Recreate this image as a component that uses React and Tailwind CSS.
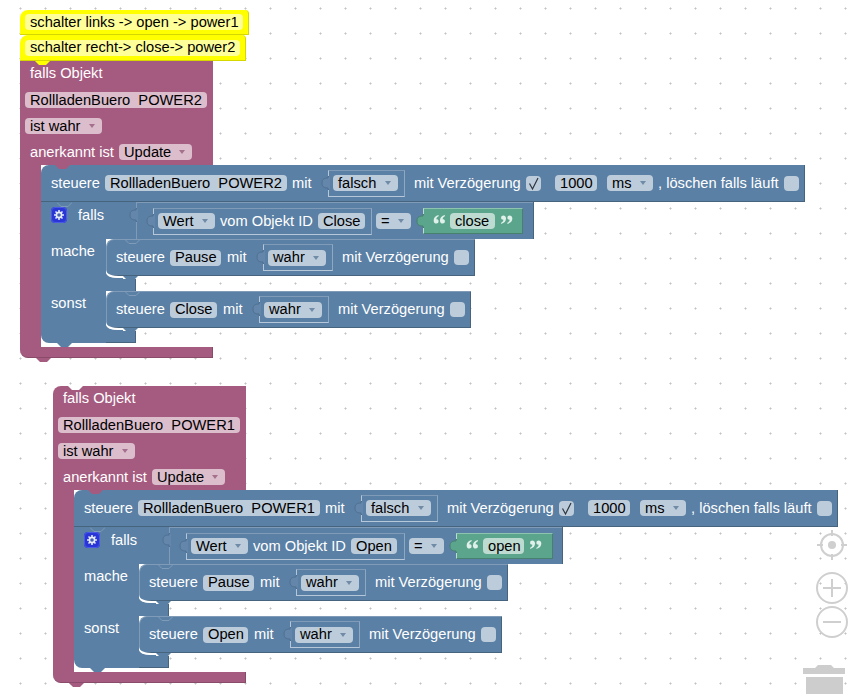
const FONT = "font-['Liberation_Sans',Arial,sans-serif] text-[14.67px] leading-none";

function Arrow({ color = "#6f8ba6" }) {
  return (
    <svg width="6" height="4" viewBox="0 0 6 4" className="shrink-0">
      <path d="M0 0H6L3 4Z" fill={color} />
    </svg>
  );
}

function Pill({ w, tone = "blue", arrow, children }) {
  const bg = { blue: "bg-[#bdccdb]", pink: "bg-[#dbbdcc]", green: "bg-[#bddbd1]", yellow: "bg-[#ffff99]" }[tone];
  const ac = tone === "pink" ? "#a5708c" : "#6f8ba6";
  return (
    <span className={`${w} ${bg} h-4 shrink-0 rounded-[4px] flex items-center justify-between pl-[5px] pr-[7px] text-black whitespace-pre`}>
      <span>{children}</span>
      {arrow && <Arrow color={ac} />}
    </span>
  );
}

function Label({ cls, children }) {
  return <span className={`${cls} shrink-0 text-white whitespace-pre`}>{children}</span>;
}

function Check({ cls, on }) {
  return (
    <span className={`${cls} w-[15px] h-[15px] shrink-0 rounded-[4px] bg-[#bdccdb] flex items-center justify-center`}>
      {on && (
        <svg width="15" height="15" viewBox="0 0 15 15">
          <path d="M3.5 7.5 L6.5 13 L12 2" fill="none" stroke="#2c3640" strokeWidth="1.2" />
        </svg>
      )}
    </span>
  );
}

function InTab({ fill = "#6386aa", stroke = "#4f7090", cls = "top-[5px]" }) {
  return (
    <svg width="9" height="14" viewBox="0 0 9 14" className={`absolute -left-[8px] ${cls}`}>
      <path d="M9 0.5 H7 V2 C3.5 2 1 3 1 7 C1 11 3.5 12 7 12 V13.5 H9Z" fill={fill} />
      <path d="M8 0.5 H7 V2 C3.5 2 1 3 1 7 C1 11 3.5 12 7 12 V13.5 H8" fill="none" stroke={stroke} strokeWidth="1" />
    </svg>
  );
}

function Notch({ cls, fill }) {
  return (
    <svg width="15" height="4" viewBox="0 0 15 4" className={`absolute z-10 ${cls}`}>
      <path d="M0 0 L4 4 H11 L15 0Z" fill={fill} />
    </svg>
  );
}

function NotchLine({ cls }) {
  return (
    <svg width="15" height="5" viewBox="0 0 15 5" className={`absolute z-10 ${cls}`}>
      <path d="M0 0.5 L4 4.5 H11 L15 0.5" fill="none" stroke="#7f9bb7" strokeWidth="1" />
    </svg>
  );
}

function Slot({ cls, children }) {
  return (
    <span className={`${cls} relative h-[27px] shrink-0 flex items-center pl-[4px] border border-t-[#7f9bb7] border-r-[#8fa8c1] border-l-[#b5c7d8] border-b-[#b5c7d8]`}>
      <InTab />
      {children}
    </span>
  );
}

function Quote({ cls, flip }) {
  return (
    <svg width="13" height="9" viewBox="0 0 13 10" className={`${cls} shrink-0 self-start mt-[6px]`}>
      <g fill="#e0f0ea" transform={flip ? "rotate(180 6.5 5)" : undefined}>
        <path d="M5.5 0 C2 1 0 3 0 6 C0 8.5 1.5 9.5 3 9.5 C4.5 9.5 5.5 8.5 5.5 7 C5.5 5.5 4.5 4.8 3 4.8 C3 3.5 4 2 5.5 1.5Z" />
        <path d="M12.5 0 C9 1 7 3 7 6 C7 8.5 8.5 9.5 10 9.5 C11.5 9.5 12.5 8.5 12.5 7 C12.5 5.5 11.5 4.8 10 4.8 C10 3.5 11 2 12.5 1.5Z" />
      </g>
    </svg>
  );
}

function Gear() {
  return (
    <svg width="16" height="16" viewBox="0 0 16 16" className="shrink-0">
      <rect width="16" height="16" rx="4" fill="#2a35d8" />
      <rect x="0.5" y="0.5" width="15" height="15" rx="3.5" fill="none" stroke="#4a5ae6" />
      <g stroke="#dfe6f5" strokeWidth="1.6">
        <path d="M8 3V13M3 8H13M4.5 4.5L11.5 11.5M11.5 4.5L4.5 11.5" />
      </g>
      <circle cx="8" cy="8" r="3.4" fill="#e6ebf7" />
      <circle cx="8" cy="8" r="1.8" fill="#4560b5" />
    </svg>
  );
}

function Crescent() {
  return (
    <svg width="17" height="10" viewBox="0 0 17 10" className="absolute left-0 top-[31px]">
      <path d="M0 3 C1 7 6 8 17 8 V9 H0Z" fill="#5b80a5" />
      <path d="M0 0 C1 4 4 6 17 6 V8 C6 8 1 7 0 3Z" fill="#fff" />
    </svg>
  );
}

function Statement({ w, name, nameW, slotMl = "ml-[13px]" }) {
  return (
    <div className={`${w} relative h-[37px] bg-[#5b80a5] rounded-tl-lg border border-l-[#7f9bb7] border-t-[#7f9bb7] border-b-[#47647f] border-r-[#47647f] flex items-center pl-[9px]`}>
      <NotchLine cls="left-[18px] -top-[1px]" />
      <Label cls="w-[54px]">steuere</Label>
      <Pill w={nameW}>{name}</Pill>
      <Label cls="ml-[6px] w-[23px]">mit</Label>
      <Slot cls={`${slotMl} w-[70px]`}>
        <Pill w="w-[58px]" arrow>wahr</Pill>
      </Slot>
      <Label cls="ml-[9px] w-[107px]">mit Verzögerung</Label>
      <Check cls="ml-[5px]" />
      <Notch cls="left-[16px] -bottom-[5px]" fill="#5b80a5" />
    </div>
  );
}

function IfBlock({ cfg }) {
  return (
    <div className="flex flex-col">
      <div className={`${cfg.ifW} relative h-[37px] flex bg-[#5b80a5] border-r border-r-[#47647f]`}>
        <NotchLine cls="left-[16px] top-0" />
        <div className="w-[95px] shrink-0 pl-[10px] pt-[5px] flex items-start">
          <Gear />
          <Label cls="ml-[11px] mt-[1px]">falls</Label>
        </div>
        <div className="relative flex-1 flex items-center border-l border-t border-[#7f9bb7]">
          <InTab cls="top-[5px]" />
          <Slot cls={`ml-[16px] ${cfg.wertW}`}>
            <Pill w="w-[57px]" arrow>Wert</Pill>
            <Label cls="ml-[5px] w-[93px]">vom Objekt ID</Label>
            <span className="ml-[5px]"><Pill w={cfg.objW}>{cfg.obj}</Pill></span>
          </Slot>
          <span className="ml-[4px]"><Pill w="w-[35px]" arrow>=</Pill></span>
          <span className={`ml-[12px] ${cfg.greenW} relative h-[26px] bg-[#5ba58c] flex items-center pl-[9px] border border-t-[#8cc4b0] border-r-[#47806d] border-b-[#47806d] border-l-[#bddbd1]`}>
            <InTab fill="#5ba58c" stroke="#47806d" cls="top-[5px]" />
            <Quote />
            <span className="ml-[4px]"><Pill w={cfg.strW} tone="green">{cfg.str}</Pill></span>
            <Quote cls="ml-[5px]" flip />
          </span>
        </div>
      </div>
      <div className="flex">
        <div className="w-[65px] bg-[#5b80a5] pl-[10px] pt-[5px]">
          <Label>mache</Label>
        </div>
        <div className="flex flex-col relative">
          <Statement w="w-[369px]" name="Pause" nameW="w-[51px]" />
          <div className="h-[3px]" />
          <div className="w-[30px] h-[12px] bg-[#5b80a5] border-r border-r-[#47647f]" />
          <Crescent />
        </div>
      </div>
      <div className="flex">
        <div className="w-[65px] bg-[#5b80a5] rounded-bl-lg pl-[10px] pt-[5px]">
          <Label>sonst</Label>
        </div>
        <div className="flex flex-col relative">
          <Statement w={cfg.st2W} name={cfg.st2} nameW={cfg.st2NW} />
          <div className="h-[3px]" />
          <div className="w-[30px] h-[12px] bg-[#5b80a5] border-r border-b border-r-[#47647f] border-b-[#47647f]" />
          <Crescent />
        </div>
      </div>
      <div className="relative h-0">
        <Notch cls="left-[16px] top-0" fill="#5b80a5" />
      </div>
    </div>
  );
}

function Trigger({ cfg }) {
  return (
    <div className="flex flex-col">
      <div className={`relative w-[193px] bg-[#a55b80] flex flex-col ${cfg.rounded ? "rounded-tl-lg" : ""}`}>
        {cfg.rounded && <Notch cls="left-[15px] top-0" fill="#ffffff" />}
        <div className="h-[26px] flex items-center pl-[10px] pb-[2px]"><Label>falls Objekt</Label></div>
        <div className="h-[26px] flex items-center pl-[5px]"><Pill w="w-[182px]" tone="pink">{cfg.dp}</Pill></div>
        <div className="h-[26px] flex items-center pl-[5px]"><Pill w="w-[77px]" tone="pink" arrow>ist wahr</Pill></div>
        <div className="h-[26px] flex items-center pl-[10px]">
          <Label cls="w-[89px]">anerkannt ist</Label>
          <Pill w="w-[73px]" tone="pink" arrow>Update</Pill>
        </div>
      </div>
      <div className="flex">
        <div className="w-[21px] bg-[#a55b80]" />
        <div className="flex flex-col">
          <div className="relative w-[764px] h-[37px] bg-[#5b80a5] rounded-tl-lg border-b border-r border-b-[#47647f] border-r-[#47647f] flex items-center pl-[10px]">
            <Notch cls="left-[14px] top-0" fill="#a55b80" />
            <Label cls="w-[54px]">steuere</Label>
            <Pill w="w-[182px]">{cfg.dp}</Pill>
            <Label cls="ml-[5px] w-[23px]">mit</Label>
            <Slot cls="ml-[13px] w-[77px]">
              <Pill w="w-[65px]" arrow>falsch</Pill>
            </Slot>
            <Label cls="ml-[9px] w-[107px]">mit Verzögerung</Label>
            <Check cls="ml-[5px]" on />
            <span className="ml-[14px]"><Pill w="w-[42px]">1000</Pill></span>
            <span className="ml-[10px]"><Pill w="w-[46px]" arrow>ms</Pill></span>
            <Label cls="ml-[5px] w-[121px]">, löschen falls läuft</Label>
            <Check cls="ml-[5px]" />
          </div>
          <IfBlock cfg={cfg} />
          <div className="h-[4px]" />
        </div>
      </div>
      <div className="relative w-[193px] h-[11px] bg-[#a55b80] rounded-bl-lg border-b border-r border-b-[#8a4a6a] border-r-[#8a4a6a]">
        <Notch cls="left-[16px] -bottom-[5px]" fill="#a55b80" />
      </div>
    </div>
  );
}

function Note({ w, h, pillW, children }) {
  return (
    <div className={`${w} ${h} relative bg-[#ffff00] rounded-tl-lg rounded-tr-sm border-b border-r border-b-[#d6d600] border-r-[#d6d600] flex items-center pl-[5px]`}>
      <Pill w={pillW} tone="yellow">{children}</Pill>
      <Notch cls="left-[15px] -bottom-[5px]" fill="#ffff00" />
    </div>
  );
}

const GROUP1 = {
  dp: "RollladenBuero  POWER2", ifW: "w-[493px]", wertW: "w-[219px]", obj: "Close", objW: "w-[47px]",
  greenW: "w-[100px]", str: "close", strW: "w-[45px]", st2: "Close", st2NW: "w-[47px]", st2W: "w-[365px]",
};
const GROUP2 = {
  dp: "RollladenBuero  POWER1", ifW: "w-[489px]", wertW: "w-[219px]", obj: "Open", objW: "w-[46px]",
  greenW: "w-[97px]", str: "open", strW: "w-[41px]", st2: "Open", st2NW: "w-[45px]", st2W: "w-[363px]", rounded: true,
};

export default function App() {
  return (
    <div className={`relative w-[863px] h-[694px] overflow-hidden bg-white ${FONT}`}>
      <svg width="863" height="694" className="absolute inset-0">
        <defs>
          <pattern id="grid" x="8" y="-4" width="25" height="25" patternUnits="userSpaceOnUse">
            <rect x="11" y="12" width="3" height="1" fill="#dcdcdc" />
            <rect x="12" y="11" width="1" height="3" fill="#dcdcdc" />
            <rect x="12" y="12" width="1" height="1" fill="#c4c0c8" />
          </pattern>
        </defs>
        <rect width="863" height="694" fill="url(#grid)" />
      </svg>

      <div className="absolute left-[20px] top-[10px] flex flex-col">
        <Note w="w-[229px]" h="h-[25px]" pillW="w-[218px]">schalter links -&gt; open -&gt; power1</Note>
        <Note w="w-[226px]" h="h-[26px]" pillW="w-[215px]">schalter recht-&gt; close-&gt; power2</Note>
        <Trigger cfg={GROUP1} />
      </div>

      <div className="absolute left-[53px] top-[386px]">
        <Trigger cfg={GROUP2} />
      </div>

      <svg width="60" height="170" viewBox="0 0 60 170" className="absolute left-[803px] top-[524px]" fill="none" stroke="#cfcfcf" strokeWidth="2">
        <circle cx="29" cy="21" r="11" />
        <circle cx="29" cy="21" r="4" fill="#cfcfcf" stroke="none" />
        <path d="M29 6V12M29 30V36M14 21H20M38 21H44" />
        <circle cx="29" cy="64" r="15" />
        <path d="M29 55V73M20 64H38" />
        <circle cx="29" cy="98" r="15" />
        <path d="M20 98H38" />
        <path d="M0 144H42V150H0Z M12 144 L15 141 H28 L31 144Z" fill="#cdcdcd" stroke="none" />
        <rect x="3" y="153" width="37" height="17" fill="#cdcdcd" stroke="none" />
      </svg>
    </div>
  );
}
